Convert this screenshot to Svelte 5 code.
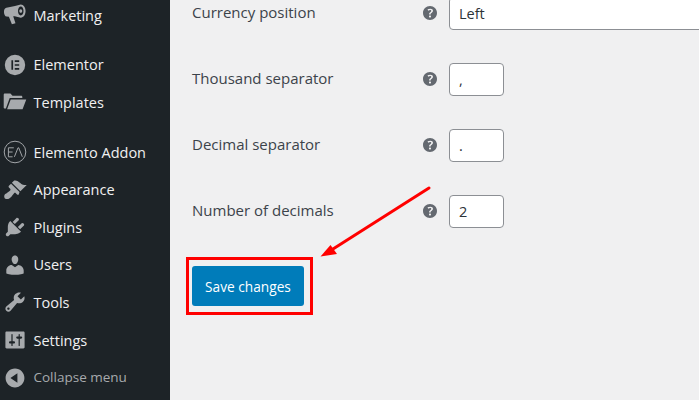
<script lang="ts">
  const help =
    'M17 10c0-3.87-3.14-7-7-7-3.87 0-7 3.13-7 7 0 3.86 3.13 7 7 7 3.86 0 7-3.14 7-7zm-6.3 1.48H9.14v-.43c0-.38.08-.7.24-.98s.46-.57.88-.89c.41-.29.68-.53.81-.71.14-.18.2-.39.2-.62 0-.25-.09-.44-.28-.58-.19-.13-.45-.19-.79-.19-.58 0-1.25.19-2 .57l-.64-1.28c.87-.49 1.8-.74 2.77-.74.81 0 1.45.2 1.92.58.48.39.71.91.71 1.55 0 .43-.09.8-.29 1.11-.19.32-.57.67-1.11 1.06-.38.28-.61.49-.71.63-.1.15-.15.34-.15.57v.35zm-1.47 2.74c-.18-.17-.27-.42-.27-.73 0-.33.08-.58.26-.75s.43-.25.77-.25c.32 0 .57.09.75.26s.27.42.27.74c0 .3-.09.55-.27.72-.18.18-.43.27-.75.27-.33 0-.58-.09-.76-.26z'

  const menu = [
    { label: 'Marketing', d: 'M14.800 1.200c2.400 0 4 2.500 4 5.500s-1.600 5.500-4 5.500l-5-1.200-1.300.1 1.900 5.700-3 .9-2.500-6.300-1.800-.1C1.600 11.300.8 9.300.8 7.500c0-1.900.8-3.400 2-3.500l7.200-1.500zM14.800 3c-1.300 0-2.300 1.600-2.300 3.700s1 3.700 2.300 3.700 2.300-1.600 2.300-3.700-1-3.700-2.300-3.700zM14.800 5.200c.8 0 1.200.7 1.200 1.500s-.4 1.500-1.200 1.500-1.200-.7-1.200-1.500.4-1.500 1.200-1.500z', gap: true },
    { label: 'Elementor', d: 'M10 1.500a8.500 8.500 0 1 0 0 17 8.500 8.500 0 0 0 0-17zM7 6h1.400v8H7zM9.800 6H13.500v1.400H9.800zM9.800 9.300H13.500v1.400H9.800zM9.800 12.600H13.500V14H9.800z' },
    { label: 'Templates', d: 'M1.500 3h4.700l1.700 1.700h7.300c.5 0 .9.400.9.900v1H5.600L2.400 15.500H1.500c-.5 0-.9-.4-.9-.9V3.900c0-.5.400-.9.900-.9zM6.400 7.900h13l-3.100 8.100H3.400z', gap: true },
    { label: 'Elemento Addon', addon: true },
    { label: 'Appearance', d: 'M14.480 11.060L7.410 3.990l1.500-1.500c.5-.56 2.300-.47 3.510.32 1.210.8 1.430 1.280 2.910 2.100 1.180.64 2.450 1.260 4.450.85zm-.71.71L6.700 4.700 4.930 6.470c-.39.39-.39 1.020 0 1.410l1.060 1.060c.39.39.39 1.030 0 1.420-.6.6-1.430 1.110-2.210 1.690-.35.26-.7.53-1.010.84C1.430 13.230.4 14.850 1.560 17.060c2.210 1.160 3.830.13 5.170-1.210.31-.31.58-.66.84-1.010.58-.78 1.090-1.610 1.690-2.210.39-.39 1.020-.39 1.410 0l1.060 1.060c.39.39 1.020.39 1.410 0z' },
    { label: 'Plugins', d: 'M13.110 4.360L9.870 7.600 8 5.730l3.240-3.240c.35-.34 1.050-.2 1.560.32.52.51.66 1.210.31 1.550zm-8 1.770l.91-1.120 9.010 9.010-1.190.84c-.71.71-2.630 1.160-3.820 1.160H6.140L4.900 17.260c-.59.59-1.540.59-2.120 0-.59-.58-.59-1.530 0-2.120l1.240-1.240v-3.880c0-1.130.4-3.190 1.090-3.890zm7.260 3.970l3.240-3.240c.34-.35 1.040-.21 1.550.31.52.51.66 1.210.31 1.550l-3.240 3.250z' },
    { label: 'Users', d: 'M10 9.250c-2.270 0-2.730-3.440-2.730-3.440C7 4.020 7.820 2 9.970 2c2.160 0 2.980 2.020 2.710 3.810 0 0-.41 3.440-2.680 3.440zm0 2.570L12.720 10c2.390 0 4.520 2.330 4.520 4.530v2.490s-3.650 1.130-7.240 1.130c-3.650 0-7.240-1.130-7.240-1.130v-2.490c0-2.250 1.940-4.480 4.470-4.480z' },
    { label: 'Tools', d: 'M16.680 9.770c-1.340 1.340-3.300 1.670-4.950.99l-5.410 6.520c-.99.99-2.590.99-3.580 0s-.99-2.590 0-3.570l6.520-5.420c-.68-1.650-.35-3.610.99-4.950 1.280-1.280 3.120-1.620 4.720-1.060l-2.890 2.890 2.820 2.820 2.860-2.870c.53 1.580.18 3.390-1.080 4.650zM3.810 16.210c.4.39 1.040.39 1.430 0 .4-.4.4-1.040 0-1.430-.39-.4-1.030-.4-1.430 0-.39.39-.39 1.030 0 1.430z' },
    { label: 'Settings', d: 'M18 16V4c0-.55-.45-1-1-1H3c-.55 0-1 .45-1 1v12c0 .55.45 1 1 1h14c.55 0 1-.45 1-1zM8 11h1c.55 0 1 .45 1 1s-.45 1-1 1H8v1.500c0 .28-.22.5-.5.5s-.5-.22-.5-.5V13H6c-.55 0-1-.45-1-1s.45-1 1-1h1V5.500c0-.28.22-.5.5-.5s.5.22.5.5V11zm5-2h-1c-.55 0-1-.45-1-1s.45-1 1-1h1V5.500c0-.28.22-.5.5-.5s.5.22.5.5V7h1c.55 0 1 .45 1 1s-.45 1-1 1h-1v5.500c0 .28-.22.5-.5.5s-.5-.22-.5-.5V9z' },
    { label: 'Collapse menu', d: 'M10 2.160c4.330 0 7.840 3.510 7.840 7.840s-3.510 7.840-7.840 7.840S2.160 14.330 2.160 10 5.710 2.160 10 2.160zm2 11.720V6.120L6.180 9.970z', dim: true }
  ]

  const fields = [
    { label: 'Currency position', value: 'Left', wide: true },
    { label: 'Thousand separator', value: ',' },
    { label: 'Decimal separator', value: '.' },
    { label: 'Number of decimals', value: '2' }
  ]
</script>

<div class="page">
  <nav class="sidebar">
    {#each menu as item}
      <a class="item" class:gap={item.gap} class:dim={item.dim} href="#top">
        {#if item.addon}
          <svg class="icon" viewBox="0 0 20 20" fill="none" stroke="currentColor" stroke-width="0.8">
            <circle cx="10" cy="10" r="9" />
            <path d="M9 6.500H4.500v7.500H8M4.500 10H8M9.500 14l3-7.500h.6l3 7.500" />
          </svg>
        {:else}
          <svg class="icon" viewBox="0 0 20 20" fill="currentColor" fill-rule="evenodd"><path d={item.d} /></svg>
        {/if}
        <span>{item.label}</span>
      </a>
    {/each}
  </nav>

  <main class="content">
    {#each fields as field}
      <div class="row">
        <span class="label">{field.label}</span>
        <svg class="help" viewBox="0 0 20 20" fill="currentColor"><path d={help} /></svg>
        <input class="field" class:wide={field.wide} value={field.value} readonly />
      </div>
    {/each}
    <button class="save" type="button">Save changes</button>

    <!-- annotation drawn over the screenshot -->
    <div class="highlight"></div>
    <svg class="arrow" width="130" height="90" viewBox="0 0 130 90">
      <path d="M128 8 L32 69" stroke="#f00" stroke-width="3" stroke-linecap="round" fill="none" />
      <path d="M19.500 76.500 L29.500 65 L36 74 Z" fill="#f00" />
    </svg>
  </main>
</div>

<style>
  :global(body) {
    margin: 0;
    background: #f0f0f1;
  }
  .page {
    display: flex;
    width: 699px;
    height: 400px;
    overflow: hidden;
    font-family: "Open Sans", "Noto Sans", sans-serif;
    font-size: 14px;
  }
  .sidebar {
    flex: 0 0 170px;
    display: flex;
    flex-direction: column;
    margin-top: -3.500px;
    background: #1d2327;
    height: 404px;
  }
  .item {
    display: flex;
    align-items: center;
    flex: 0 0 37.6px;
    gap: 6.500px;
    padding-left: 3px;
    font-size: 14.500px;
    color: #f0f0f1;
    text-decoration: none;
  }
  .item.gap {
    margin-bottom: 12px;
  }
  .item.dim {
    color: #a7aaad;
    font-size: 13.500px;
  }
  .item.dim span {
    margin-bottom: 2px;
  }
  .icon {
    flex: none;
    width: 24px;
    height: 24px;
    color: #a7aaad;
  }
  .content {
    position: relative;
    flex: 1;
    padding: 0 0 0 22px;
    background: #f0f0f1;
  }
  .row {
    display: flex;
    align-items: center;
    height: 33px;
    margin-bottom: 33px;
  }
  .row:first-child {
    margin-top: -3px;
  }
  .label {
    flex: 0 0 228px;
    margin-bottom: 4px;
    font-size: 15px;
    font-weight: 500;
    color: #3c434a;
  }
  .help {
    flex: none;
    width: 20px;
    height: 20px;
    margin-right: 9px;
    margin-bottom: 1px;
    color: #646970;
  }
  .field {
    box-sizing: border-box;
    width: 55px;
    height: 33px;
    padding: 0 9px;
    border: 1px solid #8c8f94;
    border-radius: 4px;
    background: #fff;
    color: #2c3338;
    font: inherit;
    font-size: 14.500px;
    outline: none;
  }
  .field.wide {
    flex: none;
    width: 300px;
  }
  .save {
    display: block;
    width: 112px;
    height: 40px;
    margin-top: 38px;
    padding: 0;
    border: 0;
    border-radius: 3px;
    background: #007cba;
    color: #fff;
    font: inherit;
    font-size: 13.700px;
  }
  .highlight {
    position: absolute;
    left: 16px;
    top: 257px;
    width: 127px;
    height: 58px;
    box-sizing: border-box;
    border: 3px solid #f00;
  }
  .arrow {
    position: absolute;
    left: 131px;
    top: 180px;
  }
</style>
